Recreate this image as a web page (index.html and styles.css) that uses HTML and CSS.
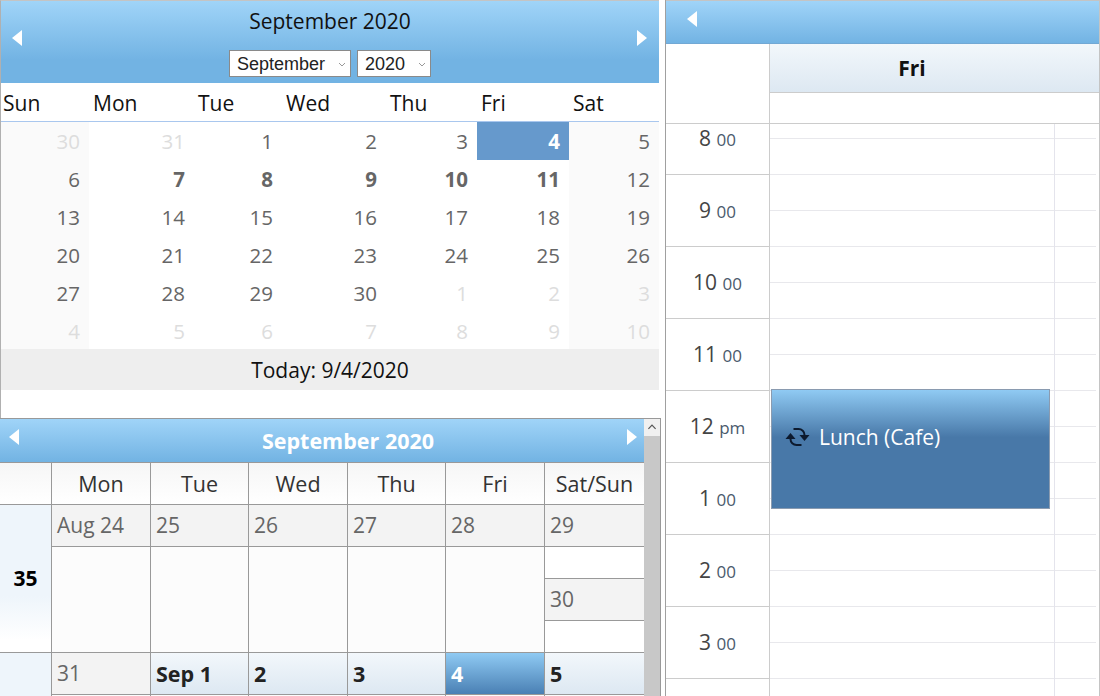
FILE: index.html
```html
<!DOCTYPE html>
<html lang="en">
<head>
  <meta charset="UTF-8">
  <meta name="viewport" content="width=device-width, initial-scale=1.0">
  <title>Calendar</title>
  <link rel="stylesheet" href="styles.css">
</head>
<body>
  <div class="left-pane">
    <!-- Date picker -->
    <div class="picker">
      <div class="picker-head">
        <svg class="arrow arrow-left" viewBox="0 0 10 16"><polygon points="10,0 10,16 0,8" /></svg>
        <div class="picker-title">
          <div class="picker-month">September 2020</div>
          <div class="picker-selects">
            <div class="drop drop-month">September
              <svg viewBox="0 0 8 5"><polyline points="1,1 4,4 7,1" /></svg>
            </div>
            <div class="drop drop-year">2020
              <svg viewBox="0 0 8 5"><polyline points="1,1 4,4 7,1" /></svg>
            </div>
          </div>
        </div>
        <svg class="arrow arrow-right" viewBox="0 0 10 16"><polygon points="0,0 0,16 10,8" /></svg>
      </div>
      <div class="picker-grid picker-days">
        <span>Sun</span><span>Mon</span><span>Tue</span><span>Wed</span><span>Thu</span><span>Fri</span><span>Sat</span>
      </div>
      <div class="picker-grid picker-dates">
        <span class="wk off">30</span><span class="off">31</span><span>1</span><span>2</span><span>3</span><span class="sel">4</span><span class="wk">5</span>
        <span class="wk">6</span><b>7</b><b>8</b><b>9</b><b>10</b><b>11</b><span class="wk">12</span>
        <span class="wk">13</span><span>14</span><span>15</span><span>16</span><span>17</span><span>18</span><span class="wk">19</span>
        <span class="wk">20</span><span>21</span><span>22</span><span>23</span><span>24</span><span>25</span><span class="wk">26</span>
        <span class="wk">27</span><span>28</span><span>29</span><span>30</span><span class="off">1</span><span class="off">2</span><span class="wk off">3</span>
        <span class="wk off">4</span><span class="off">5</span><span class="off">6</span><span class="off">7</span><span class="off">8</span><span class="off">9</span><span class="wk off">10</span>
      </div>
      <div class="picker-today">Today: 9/4/2020</div>
    </div>

    <!-- Month view -->
    <div class="month">
      <div class="month-body">
        <div class="month-head">
          <svg class="arrow arrow-left" viewBox="0 0 10 16"><polygon points="10,0 10,16 0,8" /></svg>
          <span class="month-title">September 2020</span>
          <svg class="arrow arrow-right" viewBox="0 0 10 16"><polygon points="0,0 0,16 10,8" /></svg>
        </div>
        <div class="month-grid month-days">
          <div></div><div>Mon</div><div>Tue</div><div>Wed</div><div>Thu</div><div>Fri</div><div>Sat/Sun</div>
        </div>
        <div class="month-grid month-week">
          <div class="week-no">35</div>
          <div class="day"><div class="date">Aug 24</div></div>
          <div class="day"><div class="date">25</div></div>
          <div class="day"><div class="date">26</div></div>
          <div class="day"><div class="date">27</div></div>
          <div class="day"><div class="date">28</div></div>
          <div class="day day-split">
            <div class="date">29</div>
            <div class="gap"></div>
            <div class="date">30</div>
          </div>
        </div>
        <div class="month-grid month-week">
          <div class="week-no"></div>
          <div class="day"><div class="date">31</div></div>
          <div class="day"><div class="date cur">Sep 1</div></div>
          <div class="day"><div class="date cur">2</div></div>
          <div class="day"><div class="date cur">3</div></div>
          <div class="day"><div class="date now">4</div></div>
          <div class="day"><div class="date cur">5</div></div>
        </div>
      </div>
      <div class="scrollbar">
        <div class="scroll-up"><svg viewBox="0 0 8 5"><polyline points="1,4 4,1 7,4" /></svg></div>
      </div>
    </div>
  </div>

  <!-- Day view -->
  <div class="day-pane">
    <div class="day-head">
      <svg class="arrow arrow-left" viewBox="0 0 10 16"><polygon points="10,0 10,16 0,8" /></svg>
    </div>
    <div class="day-top">
      <div class="corner"></div>
      <div class="day-top-main">
        <div class="day-name">Fri</div>
        <div class="all-day"></div>
      </div>
    </div>
    <div class="schedule">
      <div class="hours">
        <div class="hour">8 <small>00</small></div>
        <div class="hour">9 <small>00</small></div>
        <div class="hour">10 <small>00</small></div>
        <div class="hour">11 <small>00</small></div>
        <div class="hour">12 <small>pm</small></div>
        <div class="hour">1 <small>00</small></div>
        <div class="hour">2 <small>00</small></div>
        <div class="hour">3 <small>00</small></div>
        <div class="hour"></div>
      </div>
      <div class="slots">
        <div class="slots-main"></div>
        <div class="slots-side"></div>
        <div class="event">
          <svg class="event-icon" viewBox="0 0 24 20">
            <path d="M8 2 H13 A6 6 0 0 1 19 8" />
            <path d="M5 12 A6 6 0 0 0 11 18 H16" />
            <polygon class="tip" points="0,12 10,12 5,6" />
            <polygon class="tip" points="14,8 24,8 19,14" />
          </svg>
          <span>Lunch (Cafe)</span>
        </div>
      </div>
    </div>
  </div>
</body>
</html>
```

FILE: styles.css
```css
body {
  margin: 0;
  display: flex;
  height: 696px;
  overflow: hidden;
  font-family: "Open Sans", sans-serif;
  background-color: #fff;
  color: #222;
}
.arrow {
  fill: #fff;
  width: 10px;
  height: 16px;
  position: absolute;
}

/* left side */
.left-pane {
  width: 666px;
  flex: none;
  box-sizing: border-box;
  border-right: 1px solid #a0a0a0;
}
.picker {
  width: 659px;
  box-sizing: border-box;
  padding-bottom: 28px;
  border-top: 1px solid #c4c4c4;
  border-left: 1px solid #b0b0b0;
}
.picker-head {
  position: relative;
  height: 82px;
  background: linear-gradient(#a0d4f8, #72b3e3 72%);
}
.picker-head .arrow-left { left: 11px; top: 29px; }
.picker-head .arrow-right { right: 12px; top: 29px; }
.picker-title {
  text-align: center;
  color: #111;
}
.picker-month {
  font-size: 21px;
  line-height: 28px;
  padding-top: 6px;
}
.picker-selects {
  display: flex;
  justify-content: center;
  gap: 6px;
  margin-top: 15px;
}
.drop {
  display: flex;
  align-items: center;
  justify-content: space-between;
  height: 27px;
  box-sizing: border-box;
  background-color: #fff;
  border: 1px solid #8a8a8a;
  padding: 1px 4px 0 7px;
  font-family: "Liberation Sans", Arial, sans-serif;
  font-size: 18px;
  color: #222;
}
.drop svg {
  width: 8px;
  height: 5px;
  fill: none;
  stroke: #999;
  stroke-width: 1;
}
.drop-month { width: 122px; }
.drop-year { width: 74px; }

.picker-grid {
  display: grid;
  grid-template-columns: 88px 105px 88px 104px 91px 92px 90px;
}
.picker-days {
  height: 38px;
  border-bottom: 1px solid #a9c7ee;
  align-items: center;
  font-size: 21px;
  color: #111;
}
.picker-days span {
  padding: 2px 0 0 4px;
}
.picker-days span:first-child {
  padding-left: 2px;
}
.picker-dates {
  grid-auto-rows: 37.83px;
  font-size: 20.5px;
  color: #666;
}
.picker-dates span,
.picker-dates b {
  display: flex;
  align-items: center;
  justify-content: flex-end;
  padding: 1px 9px 0 0;
}
.picker-dates .wk {
  background-color: #fafafa;
}
.picker-dates .off {
  color: #ddd;
}
.picker-dates .sel {
  background-color: #6699cc;
  color: #fff;
  font-weight: bold;
}
.picker-today {
  height: 41px;
  line-height: 42px;
  background-color: #eee;
  text-align: center;
  font-size: 21px;
  color: #111;
}

.month {
  display: flex;
  width: 661px;
  height: 278px;
  box-sizing: border-box;
  overflow: hidden;
  border-top: 1px solid #999;
  border-right: 1px solid #999;
}
.month-body {
  width: 644px;
  flex: none;
}
.month-head {
  position: relative;
  height: 44px;
  padding-left: 52px;
  box-sizing: border-box;
  background: linear-gradient(#a0d4f8, #72b3e3);
  border-bottom: 1px solid #999;
  text-align: center;
}
.month-head .arrow-left { left: 9px; top: 10px; }
.month-head .arrow-right { right: 7px; top: 10px; }
.month-title {
  color: #fff;
  font-size: 21.5px;
  font-weight: bold;
  line-height: 44px;
}
.month-grid {
  display: grid;
  grid-template-columns: 51px 99px 98px 99px 98px 99px 100px;
}
.month-grid > div {
  box-sizing: border-box;
}
.month-days {
  height: 42px;
  background: linear-gradient(#f6f6f6, #fff);
  border-bottom: 1px solid #999;
  box-sizing: border-box;
  font-size: 21.5px;
  line-height: 41px;
  text-align: center;
  color: #333;
}
.month-days > div + div {
  border-left: 1px solid #999;
}
.month-week {
  height: 148px;
  border-bottom: 1px solid #999;
  box-sizing: border-box;
}
.week-no {
  background: linear-gradient(#eef5fb, #eef5fb 62%, #fff 92%);
  display: flex;
  align-items: center;
  justify-content: center;
  font-weight: bold;
  font-size: 21px;
  color: #000;
}
.day {
  border-left: 1px solid #999;
  background-color: #fcfcfc;
}
.date {
  height: 42px;
  box-sizing: border-box;
  background-color: #f3f3f3;
  border-bottom: 1px solid #999;
  padding-left: 5px;
  font-size: 21px;
  line-height: 41px;
  color: #666;
}
.date.cur {
  background: linear-gradient(#f2f7fb, #dde8f2);
  font-size: 21.5px;
  font-weight: bold;
  color: #222;
}
.date.now {
  background: linear-gradient(#8fcaf3, #4a80b4);
  font-size: 21.5px;
  font-weight: bold;
  color: #fff;
}
.day-split {
  background-color: #fff;
}
.day-split .gap {
  height: 32px;
  box-sizing: border-box;
  border-bottom: 1px solid #999;
}
.scrollbar {
  flex: 1;
  background-color: #c8c8c8;
}
.scroll-up {
  height: 17px;
  background-color: #f0f0f0;
  display: flex;
  align-items: center;
  justify-content: center;
}
.scroll-up svg {
  width: 10px;
  height: 6px;
  fill: none;
  stroke: #555;
  stroke-width: 1;
}

/* right side */
.day-pane {
  flex: 1;
  min-width: 0;
  display: flex;
  flex-direction: column;
  border-top: 1px solid #c4c4c4;
  border-right: 1px solid #c4c4c4;
}
.day-head {
  position: relative;
  height: 43px;
  flex: none;
  background: linear-gradient(#a0d4f8, #72b3e3);
  border-bottom: 1px solid #72a8d4;
  box-sizing: border-box;
}
.day-head .arrow-left { left: 21px; top: 10px; }
.day-top {
  display: flex;
  height: 79px;
  flex: none;
  border-bottom: 1px solid #ccc;
}
.corner {
  width: 103px;
  border-right: 1px solid #ccc;
}
.day-top-main {
  flex: 1;
}
.day-name {
  height: 49px;
  padding-right: 45px;
  box-sizing: border-box;
  background: linear-gradient(#f2f7fb, #dde8f2);
  border-bottom: 1px solid #ccc;
  text-align: center;
  font-size: 21px;
  font-weight: bold;
  line-height: 48px;
  color: #111;
}
.schedule {
  flex: 1;
  display: flex;
  min-height: 0;
  overflow: hidden;
}
.hours {
  width: 103px;
  flex: none;
  border-right: 1px solid #ccc;
  margin-top: -21px;
}
.hour {
  height: 72px;
  box-sizing: border-box;
  border-bottom: 1px solid #ccc;
  text-align: center;
  font-size: 21px;
  line-height: 71px;
  color: #444;
}
.hour small {
  font-size: 17px;
  color: #4a5a6c;
}
.slots {
  flex: 1;
  position: relative;
  display: flex;
  margin-right: 3px;
  background-image: linear-gradient(to bottom, transparent 35px, #e8e8ec 35px);
  background-position: 0 15px;
  background-size: 100% 36px;
}
.slots-main {
  width: 284px;
  flex: none;
  border-right: 1px solid #e4e4ec;
}
.event {
  position: absolute;
  left: 1px;
  top: 265px;
  width: 279px;
  height: 120px;
  box-sizing: border-box;
  display: flex;
  align-items: flex-start;
  padding: 33px 0 0 13px;
  gap: 9px;
  border: 1px solid #8a9bb0;
  background: linear-gradient(#8fcaf3, #4878a8 40%);
  color: #fff;
  font-size: 21px;
}
.event-icon {
  width: 25px;
  height: 20px;
  margin-top: 4px;
  fill: none;
  stroke: #0d1a2e;
  stroke-width: 2;
}
.event-icon .tip {
  fill: #0d1a2e;
  stroke: none;
}
```
